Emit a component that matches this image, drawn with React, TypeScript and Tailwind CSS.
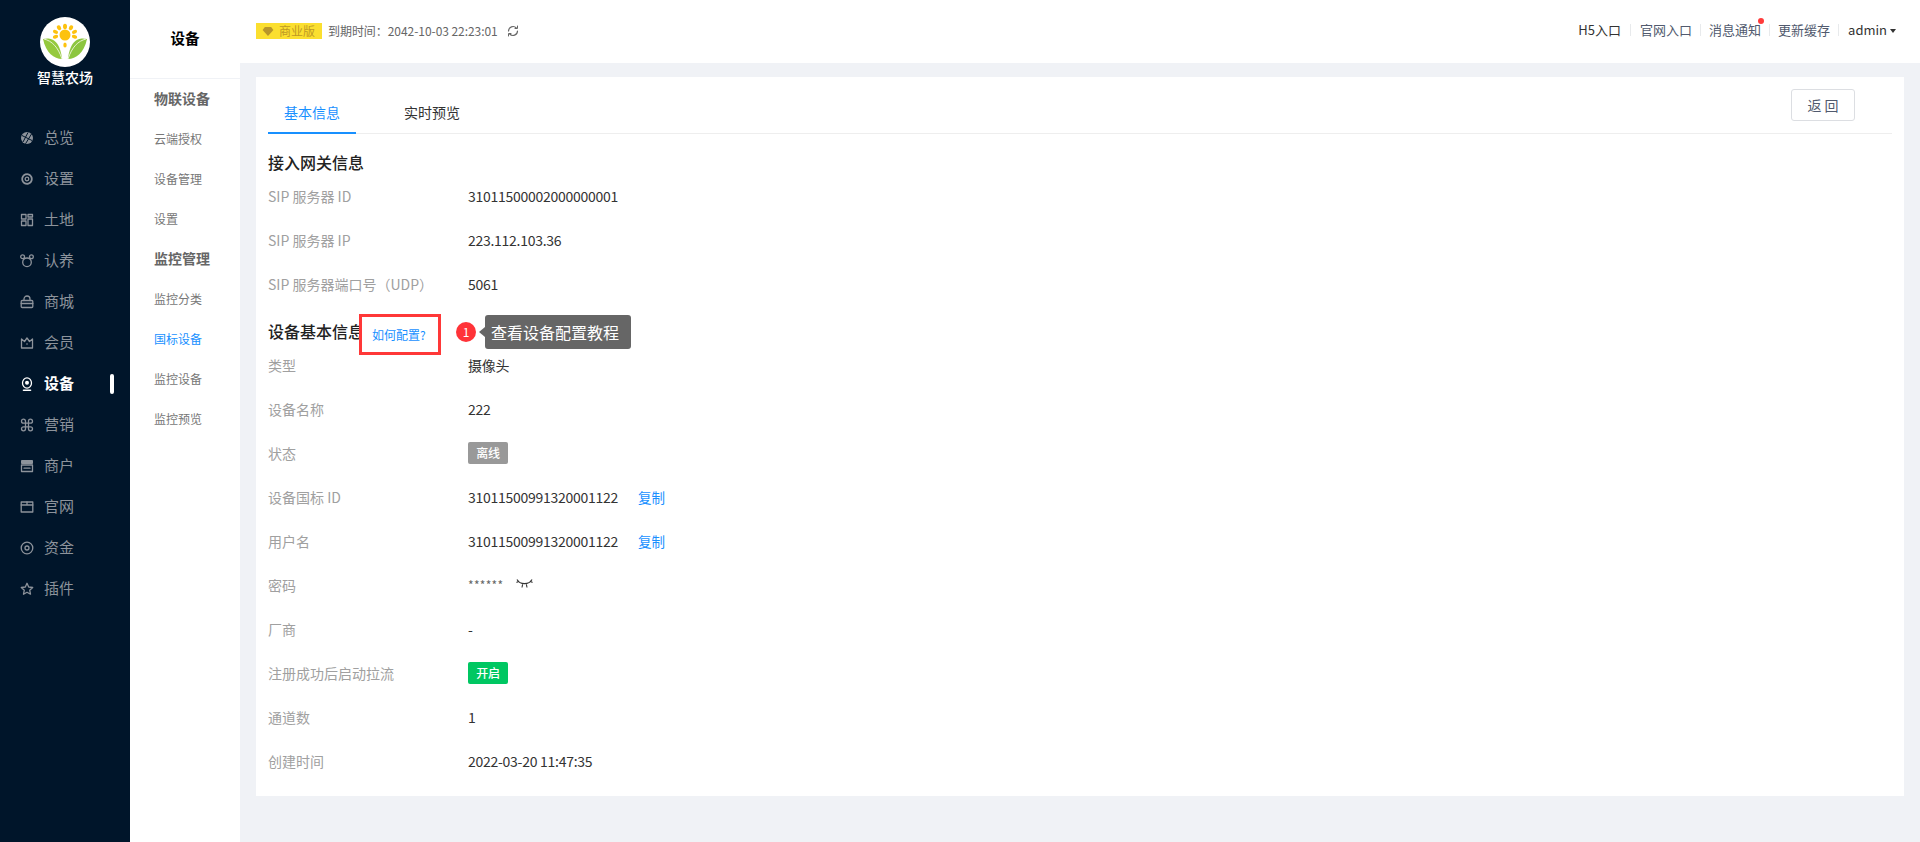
import type { ReactNode } from "react";

const stroke = {
  fill: "none",
  stroke: "currentColor",
  strokeWidth: 1.3,
  strokeLinecap: "round",
  strokeLinejoin: "round",
} as const;

function Icon({ children }: { children: ReactNode }) {
  return (
    <svg viewBox="0 0 14 14" className="h-[14px] w-[14px] shrink-0">
      {children}
    </svg>
  );
}

const NAV = [
  {
    label: "总览",
    icon: (
      <Icon>
        <circle cx="7" cy="7" r="6" fill="currentColor" />
        <path d="M2 4.500 12 9.500M3 11l5-9.500M5.500 12.800 11.500 3" fill="none" stroke="#00152a" strokeWidth="1" />
      </Icon>
    ),
  },
  {
    label: "设置",
    icon: (
      <Icon>
        <circle cx="7" cy="7" r="4.800" {...stroke} strokeWidth={1.800} strokeDasharray="2.400 .6" />
        <circle cx="7" cy="7" r="1.800" {...stroke} />
      </Icon>
    ),
  },
  {
    label: "土地",
    icon: (
      <Icon>
        <rect x="1.500" y="1.500" width="4.500" height="4.500" {...stroke} />
        <rect x="8" y="1.500" width="4.500" height="2.500" {...stroke} />
        <rect x="1.500" y="8" width="4.500" height="4.500" {...stroke} />
        <rect x="8" y="6" width="4.500" height="6.500" {...stroke} />
      </Icon>
    ),
  },
  {
    label: "认养",
    icon: (
      <Icon>
        <circle cx="7" cy="8.300" r="4.300" {...stroke} />
        <circle cx="2.600" cy="2.800" r="1.900" {...stroke} />
        <circle cx="11.400" cy="2.800" r="1.900" {...stroke} />
      </Icon>
    ),
  },
  {
    label: "商城",
    icon: (
      <Icon>
        <rect x="1.200" y="5.500" width="11.600" height="7" rx="1" {...stroke} />
        <path d="M4 5.500V4a3 3 0 0 1 6 0v1.500M1.200 8.500h11.600" {...stroke} />
      </Icon>
    ),
  },
  {
    label: "会员",
    icon: (
      <Icon>
        <path d="M1.500 3 4.500 5.500 7 2l2.500 3.500 3-2.500V12h-11z" {...stroke} />
        <circle cx="7" cy="8" r=".8" fill="currentColor" />
      </Icon>
    ),
  },
  {
    label: "设备",
    active: true,
    icon: (
      <Icon>
        <ellipse cx="7" cy="6" rx="4.500" ry="5.200" {...stroke} />
        <circle cx="7" cy="5.800" r="2" fill="currentColor" />
        <path d="M3.500 13.200h7" {...stroke} strokeWidth={1.600} />
      </Icon>
    ),
  },
  {
    label: "营销",
    icon: (
      <Icon>
        <path
          d="M5.500 5.500V3.200a2 2 0 1 0-2 2h7a2 2 0 1 0-2-2v7.600a2 2 0 1 0 2-2h-7a2 2 0 1 0 2 2z"
          {...stroke}
        />
      </Icon>
    ),
  },
  {
    label: "商户",
    icon: (
      <Icon>
        <path d="M1.500 1.500h11v3h-11z" fill="currentColor" stroke="currentColor" />
        <rect x="1.500" y="6" width="11" height="6.500" {...stroke} />
        <path d="M4 9.200h6" {...stroke} />
      </Icon>
    ),
  },
  {
    label: "官网",
    icon: (
      <Icon>
        <rect x="1.200" y="2" width="11.600" height="10" {...stroke} />
        <path d="M1.200 5h11.600M7 2v3" {...stroke} />
      </Icon>
    ),
  },
  {
    label: "资金",
    icon: (
      <Icon>
        <circle cx="7" cy="7" r="5.800" {...stroke} />
        <circle cx="7" cy="7" r="2" {...stroke} />
      </Icon>
    ),
  },
  {
    label: "插件",
    icon: (
      <Icon>
        <path d="M7 1.300 8.700 5l4 .5-3 2.700.8 4L7 10.200l-3.500 2 .8-4-3-2.700 4-.5z" {...stroke} />
      </Icon>
    ),
  },
];

const SUB_NAV = [
  { label: "物联设备", head: true },
  { label: "云端授权" },
  { label: "设备管理" },
  { label: "设置" },
  { label: "监控管理", head: true },
  { label: "监控分类" },
  { label: "国标设备", active: true },
  { label: "监控设备" },
  { label: "监控预览" },
];

const GATEWAY = [
  { label: "SIP 服务器 ID", value: "31011500002000000001" },
  { label: "SIP 服务器 IP", value: "223.112.103.36" },
  { label: "SIP 服务器端口号（UDP）", value: "5061" },
];

function Logo() {
  return (
    <svg viewBox="0 0 50 50" className="h-[50px] w-[50px]">
      <circle cx="25" cy="25" r="25" fill="#fff" />
      <g fill="#fdc20e">
        <ellipse cx="25" cy="9.500" rx="2" ry="2.800" />
        <ellipse cx="19" cy="10.800" rx="2" ry="2.600" transform="rotate(-32 19 10.800)" />
        <ellipse cx="31" cy="10.800" rx="2" ry="2.600" transform="rotate(32 31 10.800)" />
        <ellipse cx="15.500" cy="14.800" rx="2.700" ry="1.800" transform="rotate(25 15.500 14.800)" />
        <ellipse cx="34.500" cy="14.800" rx="2.700" ry="1.800" transform="rotate(-25 34.500 14.800)" />
        <ellipse cx="15.500" cy="19.800" rx="2.700" ry="1.800" transform="rotate(-15 15.500 19.800)" />
        <ellipse cx="34.500" cy="19.800" rx="2.700" ry="1.800" transform="rotate(15 34.500 19.800)" />
        <ellipse cx="25" cy="28" rx="1.700" ry="2.500" />
        <circle cx="25" cy="18" r="5.500" />
      </g>
      <path d="M3 22c8-2 17 1 19 20-8 0-16-6-19-20z" fill="#95c93d" />
      <path d="M47 22c-8-2-17 1-19 20 8 0 16-6 19-20z" fill="#8cc63f" />
      <path d="M4 22c8 2 14 8 18 20M46 22c-8 2-14 8-18 20" fill="none" stroke="#e6f2cf" strokeWidth="1" />
    </svg>
  );
}

function Tag({ color, children }: { color: string; children: ReactNode }) {
  return (
    <span
      className={`flex h-[22px] w-[40px] items-center justify-center rounded-[2px] text-[12px] font-medium text-white ${color}`}
    >
      {children}
    </span>
  );
}

function Row({ label, children }: { label: string; children: ReactNode }) {
  return (
    <div className="flex h-[44px] items-center text-[14px]">
      <span className="w-[200px] shrink-0 text-[#a0a0a0]">{label}</span>
      <div className="flex items-center text-[#333] [letter-spacing:-0.27px]">{children}</div>
    </div>
  );
}

function CopyLink() {
  return <span className="ml-[20px] text-[13.500px] tracking-normal text-[#1890ff]">复制</span>;
}

export default function App() {
  return (
    <div className="flex h-[842px] w-full overflow-hidden bg-[#f0f2f6] font-['Noto_Sans_CJK_SC',sans-serif]">
      <aside className="flex w-[130px] shrink-0 flex-col bg-[#00152a]">
        <div className="flex flex-col items-center pt-[17px]">
          <Logo />
          <span className="text-[14px] leading-[20px] font-medium text-white">智慧农场</span>
        </div>
        <nav className="mt-[30px] flex flex-col">
          {NAV.map((item) => (
            <div
              key={item.label}
              className={`flex h-[41px] items-center pl-[20px] ${item.active ? "text-white" : "text-[#8d939b]"}`}
            >
              {item.icon}
              <span className={`ml-[10px] text-[15px] ${item.active ? "font-bold" : ""}`}>{item.label}</span>
              {item.active && <span className="ml-[36px] h-[20px] w-[4px] rounded-[2px] bg-white" />}
            </div>
          ))}
        </nav>
      </aside>

      <aside className="flex w-[110px] shrink-0 flex-col bg-white">
        <div className="flex h-[79px] items-center justify-center border-b border-[#f0f2f6] pb-[2px] text-[14.500px] font-bold text-black">
          设备
        </div>
        <nav className="flex flex-col pl-[24px]">
          {SUB_NAV.map((item) => (
            <div
              key={item.label}
              className={`flex h-[40px] items-center ${
                item.head
                  ? "pb-[1px] text-[14px] font-semibold text-[#666]"
                  : item.active
                    ? "text-[12px] text-[#1890ff]"
                    : "text-[12px] text-[#777]"
              }`}
            >
              {item.label}
            </div>
          ))}
        </nav>
      </aside>

      <main className="flex min-w-0 flex-1 flex-col">
        <header className="flex h-[63px] items-center bg-white pb-[1px] pl-[16px] text-[12px]">
          <span className="flex h-[16px] w-[66px] items-center bg-[#fbdf2f] pl-[6px] text-[#bf9a24]">
            <svg viewBox="0 0 12 10" className="mr-[5px] h-[9px] w-[12px]">
              <path d="M2.500 0h7L12 3.300 6 10 0 3.300z" fill="#b8962a" />
            </svg>
            商业版
          </span>
          <span className="ml-[6px] pb-[1px] tracking-[-0.05px] text-[#666]">到期时间：2042-10-03 22:23:01</span>
          <svg viewBox="0 0 12 12" className="ml-[9px] h-[12px] w-[12px] text-[#666]">
            <path d="M1.500 6a4.500 4.500 0 0 1 7.800-3M10.500 6a4.500 4.500 0 0 1-7.800 3" {...stroke} strokeWidth={1.200} />
            <path d="M10.500 1v2.500H8M1.500 11V8.500H4" {...stroke} strokeWidth={1} />
          </svg>

          <div className="ml-auto flex items-center pr-[24px] pb-[2px] text-[13px] text-[#515a6e]">
            <span className="text-[#333]">H5入口</span>
            <span className="mx-[9px] h-[12px] w-px bg-[#e8eaec]" />
            <span>官网入口</span>
            <span className="mx-[8px] h-[12px] w-px bg-[#e8eaec]" />
            <span className="relative">
              消息通知
              <span className="absolute top-[-2px] right-[-3px] h-[6px] w-[6px] rounded-full bg-[#ff3b3b]" />
            </span>
            <span className="mx-[8px] h-[12px] w-px bg-[#e8eaec]" />
            <span>更新缓存</span>
            <span className="mr-[9px] ml-[8px] h-[12px] w-px bg-[#e8eaec]" />
            <span className="text-[#333]">admin</span>
            <span className="mt-[2px] ml-[3px] h-0 w-0 border-x-[3px] border-t-[4px] border-x-transparent border-t-[#333]" />
          </div>
        </header>

        <section className="mx-[16px] mt-[14px] h-[719px] bg-white px-[12px]">
          <div className="flex h-[57px] items-start justify-between border-b border-[#eeeeee]">
            <div className="flex">
              <div className="h-[57px] border-b-2 border-[#1890ff] px-[16px] pt-[23px] text-[14px] leading-[24px] text-[#1890ff]">
                基本信息
              </div>
              <div className="ml-[32px] px-[16px] pt-[23px] text-[14px] leading-[24px] text-[#333]">实时预览</div>
            </div>
            <button className="mt-[12px] mr-[37px] h-[32px] w-[64px] rounded-[3px] border border-[#dcdee2] text-[14px] text-[#515a6e]">
              返 回
            </button>
          </div>

          <h3 className="h-[40px] pt-[16px] text-[16px] leading-[24px] font-medium text-[#222]">接入网关信息</h3>
          {GATEWAY.map((row) => (
            <Row key={row.label} label={row.label}>
              {row.value}
            </Row>
          ))}

          <div className="relative h-[37px] pt-[13px]">
            <h3 className="text-[16px] leading-[24px] font-medium text-[#222]">设备基本信息</h3>
            <div className="absolute top-[8px] left-[91px] flex h-[41px] w-[82px] items-center border-[3px] border-[#ff3838] bg-white pl-[10px] text-[12px] text-[#1890ff]">
              如何配置?
            </div>
            <div className="absolute top-[16px] left-[188px] flex items-center">
              <span className="flex h-[20px] w-[20px] items-center justify-center rounded-full bg-[#ff3338] text-[12px] text-white">
                1
              </span>
              <span className="ml-[3px] h-0 w-0 border-y-[5px] border-r-[6px] border-y-transparent border-r-[#666]" />
            </div>
            <div className="absolute top-[9px] left-[217px] flex h-[34px] w-[146px] items-center rounded-[3px] bg-[#666] pl-[6px] text-[16px] text-white">
              查看设备配置教程
            </div>
          </div>

          <Row label="类型">摄像头</Row>
          <Row label="设备名称">222</Row>
          <Row label="状态">
            <Tag color="bg-[#999]">离线</Tag>
          </Row>
          <Row label="设备国标 ID">
            31011500991320001122
            <CopyLink />
          </Row>
          <Row label="用户名">
            31011500991320001122
            <CopyLink />
          </Row>
          <Row label="密码">
            <span className="text-[12px] tracking-[0.3px] text-[#666]">******</span>
            <svg viewBox="0 0 17 9" className="mb-[3px] ml-[13px] h-[9px] w-[17px] text-[#333]">
              <path
                d="M1 .5C4 6 13 6 16 .5M.5 3.500 3 2M16.500 3.500 14 2M6 8.500l.6-3.200M11 8.500l-.6-3.200"
                fill="none"
                stroke="currentColor"
                strokeWidth="1.100"
              />
            </svg>
          </Row>
          <Row label="厂商">-</Row>
          <Row label="注册成功后启动拉流">
            <Tag color="bg-[#00c762]">开启</Tag>
          </Row>
          <Row label="通道数">1</Row>
          <Row label="创建时间">2022-03-20 11:47:35</Row>
        </section>
      </main>
    </div>
  );
}
